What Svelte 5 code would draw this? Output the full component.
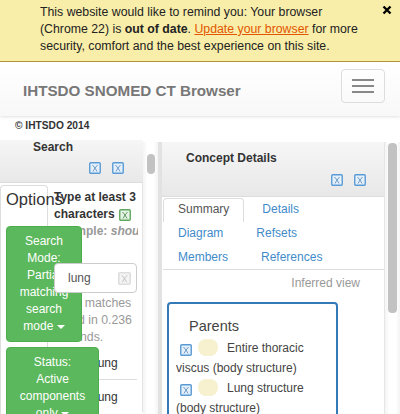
<script>
  const tabs = ["Summary", "Details", "Diagram", "Refsets", "Members", "References"];
  const parents = ["Entire thoracic viscus (body structure)", "Lung structure (body structure)"];
</script>

{#snippet icon(cls = "")}
  <svg class="ico {cls}" viewBox="0 0 12 12" width="12" height="12" aria-hidden="true">
    <rect class="box" x="0.75" y="0.75" width="10.5" height="10.5" rx="1" />
    <path class="mark" d="M3.5 3 L6 6 L8.5 3 M6 6 L4 9.5 M6 6 L8 9.5" />
  </svg>
{/snippet}

<div class="page">
  <div class="notice">
    <p>This website would like to remind you: Your browser (Chrome 22) is <b>out of date</b>. <a href="#u">Update your browser</a> for more security, comfort and the best experience on this site.</p>
    <svg class="close" viewBox="0 0 10 10" width="10" height="10" aria-hidden="true"><path d="M1.5 1.5 L8.5 8.5 M8.5 1.5 L1.5 8.5" stroke="#000" stroke-width="2.4" /></svg>
  </div>

  <nav class="navbar">
    <span class="brand">IHTSDO SNOMED CT Browser</span>
    <button class="toggle" aria-label="menu"><i></i><i></i><i></i></button>
  </nav>

  <div class="copy">© IHTSDO 2014</div>

  <div class="columns">
    <section class="left">
      <header class="head left-head">
        <h4>Search</h4>
        <div class="head-icons">{@render icon()}{@render icon()}</div>
      </header>
      <div class="left-body">
        <div class="hint">
          <b>Type at least 3 characters</b> {@render icon("ok")}
          <div class="example">Example: <em>shoulder</em></div>
        </div>
        <div class="input"><span>lung</span>{@render icon("grey")}</div>
        <div class="matches">1254 matches found in 0.236 seconds.</div>
        <div class="result">lung</div>
        <div class="result">lung</div>
      </div>
      <div class="popover">
        <div class="pop-title">Options</div>
        <div class="green mode">Search Mode: Partial matching search mode <i class="caret"></i></div>
        <div class="green status">Status: Active components only <i class="caret"></i></div>
      </div>
    </section>

    <div class="bar"><span class="thumb small"></span></div>

    <section class="right">
      <header class="head right-head">
        <h4>Concept Details</h4>
        <div class="head-icons">{@render icon()}{@render icon()}</div>
      </header>
      <ul class="tabs">
        {#each tabs as t, i}
          <li class:active={i === 0}>{t}</li>
        {/each}
      </ul>
      <div class="view">Inferred view</div>
      <div class="parents">
        <div class="parents-title">Parents</div>
        {#each parents as p}
          <div class="parent">{@render icon()}<span class="pill"></span><span class="label">{p}</span></div>
        {/each}
      </div>
    </section>

    <div class="bar last"><span class="thumb big"></span></div>
  </div>
</div>

<style>
  :global(body) { margin: 0; }
  .page {
    width: 400px; height: 414px; overflow: hidden;
    font-family: "Liberation Sans", Arial, sans-serif;
    font-size: 12px; color: #333; background: #fff;
  }
  .notice {
    position: relative; box-sizing: border-box; height: 62px;
    padding: 4px 30px 0 40px;
    background: #f9eea9; border-bottom: 1px solid #b0953c;
    color: #222; font-size: 12.3px; line-height: 17px;
  }
  .notice p { margin: 0; }
  .notice a { color: #e25600; text-decoration: underline; }
  .close { position: absolute; top: 5px; right: 8px; }

  .navbar {
    box-sizing: border-box; height: 54px;
    display: flex; align-items: center; justify-content: space-between;
    padding: 0 15px 0 23px;
    background: linear-gradient(#fff, #f8f8f8);
    box-shadow: 0 1px 3px rgba(0,0,0,.12);
  }
  .brand { font-size: 15.2px; font-weight: bold; color: #777; padding-top: 3px; }
  .toggle {
    width: 44px; height: 34px; padding: 0; margin-bottom: 6px;
    display: flex; flex-direction: column; align-items: center; justify-content: center; gap: 4px;
    background: transparent; border: 1px solid #ddd; border-radius: 4px;
  }
  .toggle i { display: block; width: 22px; height: 2px; background: #888; }

  .copy { height: 26px; padding: 4px 0 0 15px; box-sizing: border-box; font-size: 10.2px; font-weight: bold; line-height: 12px; }

  .columns { display: flex; height: 272px; align-items: stretch; }
  .left { position: relative; width: 143px; flex: none; }
  .right { flex: none; width: 227px; box-sizing: border-box; border-left: 4px solid #e2e2e2; border-right: 1px solid #e6e6e6; }
  .bar { width: 15px; flex: none; padding-left: 4px; box-sizing: border-box; background: linear-gradient(90deg, #f4f4f4, #fff 30%, #fff 70%, #f4f4f4); }
  .bar.last { padding-left: 3px; }
  .thumb { display: block; width: 8px; background: #c2c2c2; border-radius: 4px; }
  .thumb.small { height: 20px; margin-top: 12px; }
  .thumb.big { width: 9px; height: 170px; margin-top: 1px; }

  .head {
    box-sizing: border-box;
    background: linear-gradient(#f6f6f6, #e8e8e8);
    border-bottom: 1px solid #ddd;
  }
  .head h4 { margin: 0; font-size: 12px; font-weight: bold; line-height: 14px; color: #333; }
  .head-icons { display: flex; justify-content: flex-end; gap: 11px; }
  .left-head { height: 43px; padding: 0 19px 0 33px; }
  .left-head h4 { margin-top: -2px; }
  .left-head .head-icons { margin-top: 8px; }
  .right-head { height: 55px; padding: 9px 18px 0 24px; }
  .right-head .head-icons { margin-top: 9px; }

  .ico { display: inline-block; vertical-align: middle; }
  .ico .box { fill: #e6f0fa; stroke: #5b9bd5; stroke-width: 1.4; }
  .ico .mark { fill: none; stroke: #6d9ccb; stroke-width: 1; }
  .ico.ok { margin-left: 1px; }
  .ico.ok .box { fill: #e6f3e6; stroke: #5fa85f; }
  .ico.ok .mark { stroke: #5f9a5f; }
  .ico.grey { width: 13px; height: 13px; }
  .ico.grey .box { fill: #f4f4f4; stroke: #ddd; }
  .ico.grey .mark { stroke: #ccc; }

  .left-body { border-right: 1px solid #e4e4e4; height: 229px; overflow: hidden; }
  .hint { padding: 6px 4px 0 54px; line-height: 17px; color: #333; }
  .example { color: #999; font-weight: bold; white-space: nowrap; overflow: hidden; }
  .input {
    box-sizing: border-box; margin: 23px 5px 0 54px; height: 30px;
    display: flex; align-items: center; justify-content: space-between;
    padding: 0 5px 0 13px;
    position: relative; z-index: 2;
    background: #fff; border: 1px solid #ccc; border-radius: 4px;
    color: #555;
  }
  .matches { padding: 2px 8px 0 54px; color: #999; font-size: 12.3px; line-height: 17px; }
  .result { margin: 0 5px 0 40px; padding: 8px 0 7px 55px; line-height: 18px; border-bottom: 1px solid #ddd; }
  .popover {
    position: absolute; left: 0; top: 43px; z-index: 1;
    box-sizing: border-box; width: 48px; height: 229px;
    background: #fff; border: 1px solid #ddd; border-bottom: 0; border-radius: 4px 4px 0 0;
  }
  .pop-title { padding: 3px 0 0 5px; font-size: 16.5px; line-height: 20px; white-space: nowrap; }
  .green {
    box-sizing: border-box; margin-left: 5px;
    padding: 6px 5px; text-align: center; line-height: 17px;
    color: #fff; background: #5cb85c; border: 1px solid #4cae4c; border-radius: 4px;
  }
  .mode { width: 76px; margin-top: 17px; }
  .status { width: 93px; margin-top: 5px; padding: 6px 11px; }
  .caret { display: inline-block; vertical-align: middle; border: 4px solid transparent; border-top-color: #fff; border-bottom: 0; }

  .tabs { list-style: none; margin: 1px 0 0 1px; padding: 0; display: flex; flex-wrap: wrap; align-content: flex-start; column-gap: 3px; border-bottom: 1px solid #ddd; height: 72px; box-sizing: border-box; }
  .tabs li { height: 24px; box-sizing: border-box; padding: 4px 15px 0; line-height: 15px; color: #428bca; }
  .tabs li.active { color: #555; background: #fff; border: 1px solid #ddd; border-bottom: 0; border-radius: 4px 4px 0 0; padding: 3px 14px 0; }
  .view { text-align: right; padding: 6px 24px 0 0; line-height: 15px; color: #999; }
  .parents {
    box-sizing: border-box; width: 171px; margin: 11px 0 0 5px; height: 130px;
    padding: 12px 6px 0 7px;
    border: 2px solid #337ab7; border-radius: 4px; line-height: 20px; color: #444;
  }
  .parents-title { padding-left: 13px; font-size: 14.5px; line-height: 20px; margin-bottom: 2px; }
  .parent .ico { margin: 3px 6px 0 4px; }
  .pill { display: inline-block; width: 20px; height: 17px; border-radius: 8px; background: #f8f1cf; vertical-align: middle; margin: -2px 9px 0 0; }
</style>
